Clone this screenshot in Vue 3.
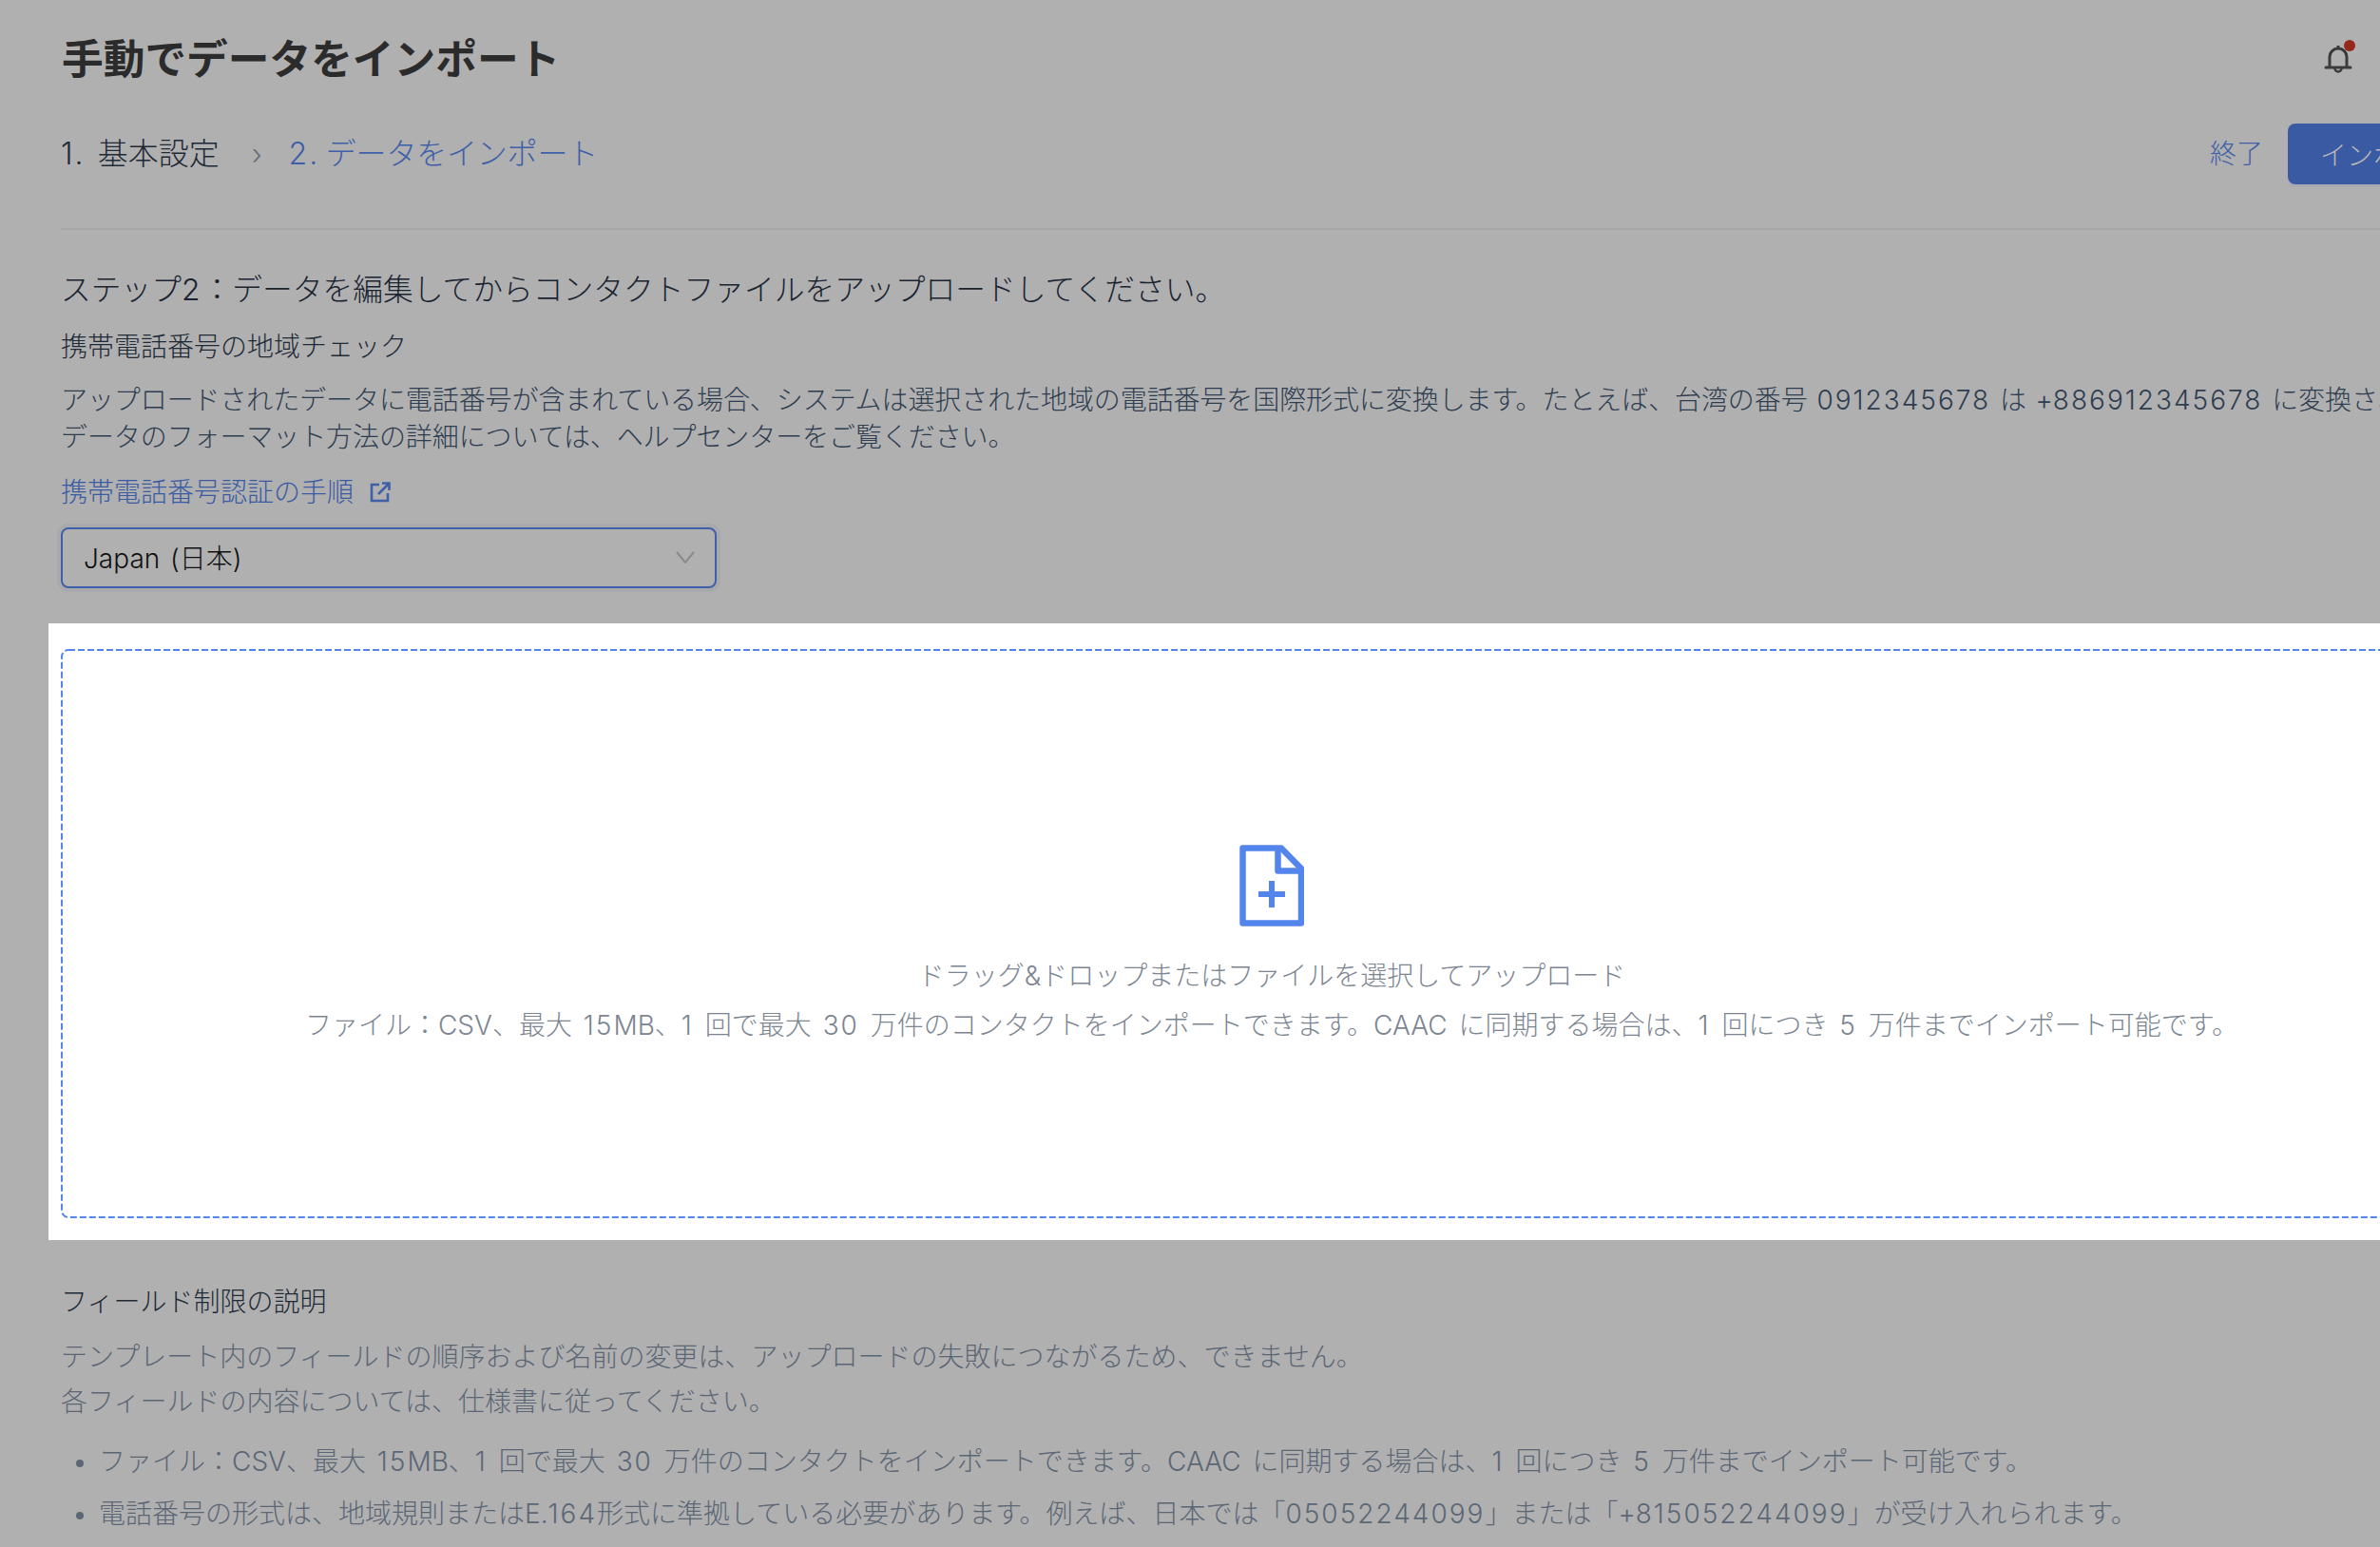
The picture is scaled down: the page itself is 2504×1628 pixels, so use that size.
<script setup>
import { h } from 'vue'

// Digits in the reference run wider than Inter's, so they get their own tracking.
const T = ({ t }) =>
  t.split(/(\d+)/).map((s, i) => (i % 2 ? h('span', { class: 'dg' }, s) : s))
T.props = ['t']

const bullets = [
  'ファイル：CSV、最大 15MB、1 回で最大 30 万件のコンタクトをインポートできます。CAAC に同期する場合は、1 回につき 5 万件までインポート可能です。',
  '電話番号の形式は、地域規則またはE.164形式に準拠している必要があります。例えば、日本では「05052244099」または「+815052244099」が受け入れられます。',
]
</script>

<template>
  <div class="page">
    <header class="top">
      <h1 class="title">手動でデータをインポート</h1>
      <span class="bell">
        <svg width="30" height="32" viewBox="0 0 30 32" fill="none" stroke="#3a3a3c" stroke-width="3">
          <path d="M6 24V14a9 9 0 0 1 18 0v10" />
          <path d="M2 25h26" stroke-linecap="round" />
          <path d="M15 2v3" />
          <path d="M11.500 26a3.500 3.500 0 0 0 7 0" stroke-width="2.500" />
        </svg>
        <i class="dot"></i>
      </span>
    </header>

    <div class="steps">
      <span class="step"><T t="1. 基本設定" /></span>
      <span class="chev">›</span>
      <span class="step active"><T t="2. データをインポート" /></span>
      <span class="grow"></span>
      <a class="quit">終了</a>
      <button class="primary">インポート</button>
    </div>

    <section class="intro">
      <h2 class="stephead"><T t="ステップ2：データを編集してからコンタクトファイルをアップロードしてください。" /></h2>
      <h3 class="sub first">携帯電話番号の地域チェック</h3>
      <p class="para"><T t="アップロードされたデータに電話番号が含まれている場合、システムは選択された地域の電話番号を国際形式に変換します。たとえば、台湾の番号 0912345678 は +886912345678 に変換されます。" /></p>
      <p class="para">データのフォーマット方法の詳細については、ヘルプセンターをご覧ください。</p>
      <a class="link">
        携帯電話番号認証の手順
        <svg width="24" height="24" viewBox="0 0 24 24" fill="none" stroke="#3f60a8" stroke-width="2.600">
          <path d="M11 4H3v17h17v-8" />
          <path d="M10 14L21 3M14 2.500h7.500V10" />
        </svg>
      </a>
      <div class="select">
        <span>Japan (日本)</span>
        <svg width="20" height="13" viewBox="0 0 20 13" fill="none" stroke="#8a8a8a" stroke-width="2">
          <path d="M1 1L10 12 19 1" />
        </svg>
      </div>
    </section>

    <section class="spot">
      <div class="drop">
        <svg class="dash" width="2548" height="599" fill="none" stroke="#5485ec" stroke-width="2" stroke-dasharray="7 3">
          <rect x="1" y="1" width="2546" height="597" rx="7" />
        </svg>
        <svg class="file" width="68" height="86" viewBox="0 0 68 86" fill="none" stroke="#5485ec" stroke-width="6.500" stroke-linejoin="round">
          <path d="M3.500 3.500H44L65 25V82.500H3.500Z" />
          <path d="M40.500 3.500V27.500H65" />
          <path d="M20 52H48M34 38V66" stroke-width="6" />
        </svg>
        <p class="d1">ドラッグ&amp;ドロップまたはファイルを選択してアップロード</p>
        <p class="d2"><T t="ファイル：CSV、最大 15MB、1 回で最大 30 万件のコンタクトをインポートできます。CAAC に同期する場合は、1 回につき 5 万件までインポート可能です。" /></p>
      </div>
    </section>

    <section class="notes">
      <h3 class="sub">フィールド制限の説明</h3>
      <p class="muted m1">テンプレート内のフィールドの順序および名前の変更は、アップロードの失敗につながるため、できません。</p>
      <p class="muted m2">各フィールドの内容については、仕様書に従ってください。</p>
      <ul class="list">
        <li v-for="b in bullets" :key="b"><T :t="b" /></li>
      </ul>
    </section>
  </div>
</template>

<style>
html, body { margin: 0; background: #b0b0b0; overflow: hidden; }
.dg { letter-spacing: 2px; }
</style>

<style scoped>
.page {
  width: 2504px;
  height: 1628px;
  overflow: hidden;
  background: #b0b0b0;
  padding-left: 64px;
  box-sizing: border-box;
  font-family: Inter, "Noto Sans CJK JP", sans-serif;
  font-weight: 300;
  word-spacing: 4px;
  color: #1f2a37;
}
.top {
  height: 118px;
  display: flex;
  align-items: center;
  justify-content: space-between;
  padding-right: 29px;
}
h1, h2, h3, p, ul { margin: 0; font-weight: 300; }
.title {
  font-size: 43.700px;
  font-weight: 700;
  line-height: 60px;
  color: #2b2b2b;
  white-space: nowrap;
  margin: 7px 0 0 1px;
}
.bell { position: relative; display: flex; margin-top: 6px; }
.dot {
  position: absolute;
  right: -3px;
  top: -4px;
  width: 12px;
  height: 12px;
  border-radius: 50%;
  background: #96281b;
}
.steps {
  height: 122px;
  display: flex;
  align-items: flex-start;
  border-bottom: 2px solid #a6a6a6;
  width: 2583px;
  white-space: nowrap;
}
.step { font-size: 32px; line-height: 88px; color: #1f2a37; word-spacing: 6px; }
.step.active { color: #3f60a8; word-spacing: 0; letter-spacing: -0.2px; }
.chev { font-size: 30px; line-height: 88px; color: #6b6f76; margin: 0 28px 0 34px; }
.grow { flex: 1; }
.quit { font-size: 28px; line-height: 88px; color: #3f60a8; margin-right: 26px; }
.primary {
  margin-top: 12px;
  height: 64px;
  width: 240px;
  border: 0;
  border-radius: 8px;
  background: #3a5ba4;
  box-shadow: 0 3px 0 #a9abb3;
  color: #b9b9b9;
  font: inherit;
  font-size: 28px;
  text-align: left;
  padding-left: 34px;
}
.intro { white-space: nowrap; }
.stephead { font-size: 31.750px; line-height: 44px; margin-top: 41px; color: #1a2431; }
.sub { font-size: 28px; line-height: 40px; color: #1f2a37; }
.sub.first { margin-top: 18px; }
.para { font-size: 28px; line-height: 39px; color: #2f3d50; letter-spacing: -0.09px; word-spacing: 2px; }
.intro .sub + .para { margin-top: 17px; }
.link {
  display: flex;
  align-items: center;
  gap: 16px;
  font-size: 28px;
  line-height: 40px;
  color: #3a5ba4;
  margin-top: 18px;
}
.select {
  margin-top: 17px;
  width: 690px;
  height: 64px;
  box-sizing: border-box;
  border: 2px solid #3f60a8;
  border-radius: 8px;
  box-shadow: 0 0 0 4px #a8a9ad;
  display: flex;
  align-items: center;
  justify-content: space-between;
  padding: 0 21px 2px 22px;
  font-size: 28px;
  word-spacing: 3px;
  color: #111;
}
.spot {
  margin: 37px 0 0 -13px;
  width: 2600px;
  height: 649px;
  box-sizing: border-box;
  background: #fff;
  padding: 27px 0 0 13px;
}
.drop {
  position: relative;
  height: 599px;
  box-sizing: border-box;
  display: flex;
  flex-direction: column;
  align-items: center;
  padding-top: 206px;
  width: 2548px;
  white-space: nowrap;
}
.dash { position: absolute; left: 0; top: 0; }
.file { flex: none; }
.d1 { font-size: 28px; line-height: 40px; color: #7c8592; margin-top: 32px; }
.d2 { font-size: 28px; line-height: 40px; color: #7c8592; margin-top: 12px; }
.notes { white-space: nowrap; padding-top: 45px; }
.muted { font-size: 28px; line-height: 40px; color: #5c6776; }
.m1 { margin-top: 18px; }
.m2 { margin-top: 7px; }
.list { list-style: none; padding: 0 0 0 40px; margin-top: 23px; }
.list li {
  position: relative;
  font-size: 28px;
  line-height: 40px;
  color: #5c6776;
  margin-bottom: 15px;
}
.list li::before {
  content: "";
  position: absolute;
  left: -24px;
  top: 18px;
  width: 8px;
  height: 8px;
  border-radius: 50%;
  background: #5c6776;
}
</style>
